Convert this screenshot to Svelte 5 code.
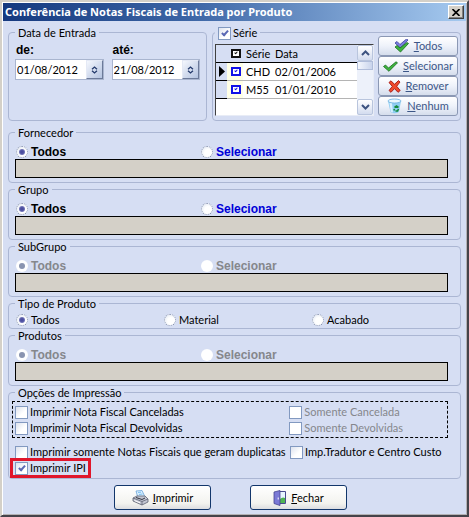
<script>
  let startDate = "01/08/2012";
  let endDate = "21/08/2012";
  let useSeries = true;
  let current = 0;
  let allSeries = true;

  let series = [
    { code: "CHD", date: "02/01/2006", checked: true },
    { code: "M55", date: "01/01/2010", checked: true },
  ];

  const filters = [
    { id: "fornecedor", title: "Fornecedor", disabled: false },
    { id: "grupo", title: "Grupo", disabled: false },
    { id: "subgrupo", title: "SubGrupo", disabled: true },
  ];
  const products = { id: "produtos", title: "Produtos", disabled: true };

  let mode = {
    fornecedor: "todos",
    grupo: "todos",
    subgrupo: "todos",
    produtos: "todos",
  };
  let productType = "Todos";
  const productTypes = ["Todos", "Material", "Acabado"];

  let canceled = false;
  let returned = false;
  let duplicates = false;
  let translator = false;
  let ipi = true;

  const setAll = (value) => {
    series = series.map((s) => ({ ...s, checked: value }));
    allSeries = value;
  };

  const removeCurrent = () => {
    series = series.filter((s, i) => i != current);
    current = 0;
  };
</script>

{#snippet group(f)}
  <fieldset class="filter" disabled={f.disabled}>
    <legend>{f.title}</legend>
    <div class="choices">
      <label class="option">
        <input type="radio" name={f.id} value="todos" bind:group={mode[f.id]} />
        Todos
      </label>
      <label class="option blue">
        <input type="radio" name={f.id} value="sel" bind:group={mode[f.id]} />
        Selecionar
      </label>
    </div>
    <input class="bar" type="text" aria-label={f.title} readonly />
  </fieldset>
{/snippet}

{#snippet arrows()}
  <svg width="7" height="8" viewBox="0 0 7 8">
    <path d="M1 3.2 3.5 1 6 3.2M1 4.8 3.5 7 6 4.8" fill="none" stroke="#23396b" stroke-width="1.3" />
  </svg>
{/snippet}

<main class="window">
  <header>
    <h1>Conferência de Notas Fiscais de Entrada por Produto</h1>
    <button class="close" aria-label="Fechar janela">
      <svg width="8" height="7" viewBox="0 0 8 7">
        <path d="M.5 0 7.5 7M7.5 0 .5 7" stroke="#000" stroke-width="1.6" />
      </svg>
    </button>
  </header>

  <form on:submit|preventDefault>
    <div class="top">
      <fieldset class="dates">
        <legend>Data de Entrada</legend>
        <div class="date-row">
          <div class="date">
            <label for="start">de:</label>
            <div class="spin">
              <input id="start" type="text" bind:value={startDate} />
              <button type="button" aria-label="Alterar data inicial">{@render arrows()}</button>
            </div>
          </div>
          <div class="date">
            <label for="end">até:</label>
            <div class="spin">
              <input id="end" type="text" bind:value={endDate} />
              <button type="button" aria-label="Alterar data final">{@render arrows()}</button>
            </div>
          </div>
        </div>
      </fieldset>

      <fieldset class="series">
        <legend>
          <label class="option"><input type="checkbox" bind:checked={useSeries} />Série</label>
        </legend>
        <div class="series-body">
          <div class="list">
            <div class="table-area">
              <table>
                <thead>
                  <tr>
                    <th class="mark"></th>
                    <th class="tick">
                      <input
                        type="checkbox"
                        class="mini dark"
                        aria-label="Todas as séries"
                        bind:checked={allSeries}
                        on:change={() => setAll(allSeries)}
                      />
                    </th>
                    <th class="code">Série</th>
                    <th>Data</th>
                  </tr>
                </thead>
                <tbody>
                  {#each series as s, i}
                    <tr on:click={() => (current = i)}>
                      <td class="mark">
                        {#if i == current}
                          <svg width="6" height="11" viewBox="0 0 6 11"><path d="M0 0 6 5.5 0 11Z" /></svg>
                        {/if}
                      </td>
                      <td class="tick">
                        <input type="checkbox" class="mini" aria-label={s.code} bind:checked={s.checked} />
                      </td>
                      <td>{s.code}</td>
                      <td>{s.date}</td>
                    </tr>
                  {/each}
                </tbody>
              </table>
            </div>
            <div class="scroll">
              <button type="button" aria-label="Subir">
                <svg width="9" height="6" viewBox="0 0 9 6"><path d="M1 5 4.5 1.5 8 5" fill="none" stroke="#3d5380" stroke-width="2" /></svg>
              </button>
              <div class="thumb"></div>
              <div class="track"></div>
              <button type="button" aria-label="Descer">
                <svg width="9" height="6" viewBox="0 0 9 6"><path d="M1 1 4.5 4.5 8 1" fill="none" stroke="#3d5380" stroke-width="2" /></svg>
              </button>
            </div>
          </div>

          <div class="actions">
            <button type="button" on:click={() => setAll(true)}>
              <svg width="15" height="14" viewBox="0 0 15 14">
                <path d="M1 4 3 2.5 6 5.5 12.5 0 14 1 6.5 9Z" fill="#7a7fe0" stroke="#3c3f9c" stroke-width=".8" />
                <path d="M1 8 3 6.5 6 9 13 3.5 14.5 4.5 6.5 13Z" fill="#3fb53f" stroke="#176b1d" stroke-width=".8" />
              </svg>
              <span><u>T</u>odos</span>
            </button>
            <button type="button">
              <svg width="15" height="11" viewBox="0 0 15 11">
                <path d="M.5 5.5 2.5 4 5.5 7 13 .8 14.5 1.8 6 10.3Z" fill="#3fb53f" stroke="#176b1d" stroke-width=".8" />
              </svg>
              <span><u>S</u>elecionar</span>
            </button>
            <button type="button" on:click={removeCurrent}>
              <svg width="13" height="13" viewBox="0 0 13 13">
                <path d="M1 2.5 3 .8 6.5 4.3 10.5.6 12 2 8.7 6.3 12.2 10.5 10 12.3 6.5 8.6 3 12.3 1 10.5 4.3 6.4Z" fill="#ef4a2c" stroke="#a31510" stroke-width=".9" />
              </svg>
              <span><u>R</u>emover</span>
            </button>
            <button type="button" on:click={() => setAll(false)}>
              <svg width="15" height="16" viewBox="0 0 15 16">
                <path d="M1 3 14 3 12 14Q7.5 16.5 3.5 14Z" fill="#8fcdf2" />
                <path d="M2.5 5 5 5 6 14.5 3.8 13.8Z" fill="#d6f0ff" />
                <ellipse cx="7.5" cy="3" rx="6.5" ry="2" fill="#e9f7ff" stroke="#69aee0" stroke-width=".8" />
                <path d="M7.5 9.5 9.5 8 11.5 9.5M11.5 11 10.5 13 8.5 13M7.5 12.5 7 11" fill="none" stroke="#138a3c" stroke-width="1.6" />
              </svg>
              <span><u>N</u>enhum</span>
            </button>
          </div>
        </div>
      </fieldset>
    </div>

    {#each filters as f}
      {@render group(f)}
    {/each}

    <fieldset class="types">
      <legend>Tipo de Produto</legend>
      <div class="choices three">
        {#each productTypes as t}
          <label class="option">
            <input type="radio" name="tipo" value={t} bind:group={productType} />
            {t}
          </label>
        {/each}
      </div>
    </fieldset>

    {@render group(products)}

    <fieldset class="print">
      <legend>Opções de Impressão</legend>
      <div class="grid dashed">
        <label class="option"><input type="checkbox" bind:checked={canceled} />Imprimir Nota Fiscal Canceladas</label>
        <label class="option off"><input type="checkbox" disabled />Somente Cancelada</label>
        <label class="option"><input type="checkbox" bind:checked={returned} />Imprimir Nota Fiscal Devolvidas</label>
        <label class="option off"><input type="checkbox" disabled />Somente Devolvidas</label>
      </div>
      <div class="grid">
        <label class="option">
          <input type="checkbox" bind:checked={duplicates} />Imprimir somente Notas Fiscais que geram duplicatas
        </label>
        <label class="option"><input type="checkbox" bind:checked={translator} />Imp.Tradutor e Centro Custo</label>
        <label class="option highlight"><input type="checkbox" bind:checked={ipi} />Imprimir IPI</label>
      </div>
    </fieldset>

    <footer>
      <button type="submit">
        <svg width="17" height="16" viewBox="0 0 17 16">
          <path d="M4 1 10 .5 13 7 6 8Z" fill="#d9efff" stroke="#6ba4d8" stroke-width=".8" />
          <path d="M6 2.5 9 2.2M7 4.5 10.5 4" stroke="#7fc0f0" />
          <path d="M1 8 5 6 13 6 16 9 16 12 10 15 1 11Z" fill="#c3c6d2" stroke="#5c6070" stroke-width=".8" />
          <path d="M1 8 10 11.5 16 9M10 11.5 10 15" fill="none" stroke="#5c6070" stroke-width=".8" />
          <path d="M4 7.5 10 9.5 13 8" fill="none" stroke="#33353f" />
          <path d="M2.5 10.5 8 12.8" stroke="#fff" />
        </svg>
        <span><u>I</u>mprimir</span>
      </button>
      <button type="button">
        <svg width="14" height="16" viewBox="0 0 14 16">
          <path d="M5 1.5 12.5 1.5 12.5 13.5 5 13.5Z" fill="#e8f6ff" stroke="#494b8e" />
          <path d="M7 9Q9.5 6.5 12 8L12 13 7 13Z" fill="#4fb553" />
          <path d="M1 2 7 .5 7 15.5 1 13.5Z" fill="#7b79d6" stroke="#46458f" stroke-width=".8" />
          <path d="M5.2 7.5 5.2 9.5" stroke="#fff" />
        </svg>
        <span><u>F</u>echar</span>
      </button>
    </footer>
  </form>
</main>

<style>
  :global(body) {
    margin: 0;
    background: #d6def3;
  }

  .window {
    box-sizing: border-box;
    border: 2px solid #d4d0c8;
    border-right-color: #45434a;
    border-bottom-color: #45434a;
    padding: 1px;
    box-shadow: inset 1px 1px #fff, inset -1px -1px #b4b2b4;
    background: #d6def3;
    font: 11px/14px Lato, "Liberation Sans", Arial, sans-serif;
    color: #000;
  }

  button,
  input {
    font: inherit;
    color: inherit;
    margin: 0;
    box-sizing: border-box;
  }

  button {
    padding: 0;
    display: flex;
    align-items: center;
    justify-content: center;
  }

  svg {
    flex: none;
    display: block;
  }

  header {
    display: flex;
    align-items: center;
    justify-content: space-between;
    height: 18px;
    padding: 0 2px;
    background: linear-gradient(90deg, #15397f, #3c65a5 40%, #a6caf0);
  }

  h1 {
    margin: 0;
    font: bold 11px/18px "Noto Sans", Tahoma, sans-serif;
    color: #fff;
    white-space: nowrap;
  }

  .close {
    width: 16px;
    height: 14px;
    border: 1px solid;
    border-color: #fff #404040 #404040 #fff;
    background: #d4d0c8;
    box-shadow: inset -1px -1px #808080;
  }

  form {
    padding: 5px 5px 4px 5px;
  }

  fieldset {
    min-width: 0;
    margin: 0;
    padding: 0 12px 4px 6px;
    border: 1px solid #abb6d3;
    border-radius: 4px;
  }

  legend {
    height: 12px;
    padding: 0 3px;
  }

  .top {
    display: grid;
    grid-template-columns: 199fr 249fr;
    gap: 5px;
    margin-bottom: 5px;
  }

  .dates {
    padding-right: 6px;
  }

  .date-row {
    display: grid;
    grid-template-columns: 1fr 1fr;
    gap: 8px;
    padding-top: 5px;
  }

  .date {
    min-width: 0;
  }

  .date label {
    display: block;
    height: 16px;
    padding-left: 1px;
    font-family: "Liberation Sans", Arial, sans-serif;
    font-weight: bold;
    font-size: 12px;
  }

  .spin {
    display: flex;
    height: 21px;
    box-sizing: border-box;
    border: 1px solid #a9b5cf;
    background: #fff;
  }

  .spin input {
    flex: 1;
    min-width: 0;
    border: 0;
    padding: 0 1px;
    background: none;
  }

  .spin button {
    width: 17px;
    border: 1px solid;
    border-color: #e4e9f5 #6c7a99 #6c7a99 #e4e9f5;
    background: linear-gradient(135deg, #f4f7fd, #b4c3e0);
  }

  .option {
    display: flex;
    align-items: center;
    white-space: nowrap;
    gap: 2px;
  }

  .option input {
    appearance: none;
    flex: none;
    position: relative;
    width: 13px;
    height: 13px;
    border: 1px solid #8299c0;
    background: linear-gradient(135deg, #dde2ee, #fff 60%);
  }

  .option input[type="radio"] {
    width: 12px;
    height: 12px;
    margin-left: 1px;
    margin-right: 1px;
    border: 1px dotted #8490ae;
    border-radius: 50%;
    background: radial-gradient(circle at 60% 60%, #fff 40%, #dde4f0);
  }

  .option input:disabled {
    background: #fff;
  }

  .option input[type="radio"]:disabled {
    border-color: #fff;
  }

  .option input[type="radio"]:checked::after {
    content: "";
    position: absolute;
    inset: 2px;
    border-radius: 50%;
    background: radial-gradient(circle, #4c4ea0 30%, #9a9fd0);
  }

  .option input[type="radio"]:disabled:checked::after {
    background: #8a94b0;
  }

  .option input[type="checkbox"]:checked::after {
    content: "";
    position: absolute;
    left: 4px;
    top: 1px;
    width: 2px;
    height: 5px;
    border: solid #5a68b4;
    border-width: 0 2px 2px 0;
    transform: rotate(42deg);
  }

  .series {
    padding: 0 2px 4px 2px;
  }

  .series-body {
    display: flex;
    gap: 4px;
  }

  .list {
    flex: 1;
    min-width: 0;
    display: flex;
    height: 72px;
    margin-top: 6px;
    box-sizing: border-box;
    border: 1px solid;
    border-color: #404040 #e8ecf6 #e8ecf6 #404040;
    background: #fff;
  }

  .table-area {
    flex: 1;
    min-width: 0;
    overflow: hidden;
  }

  table {
    width: 100%;
    border-collapse: collapse;
    table-layout: fixed;
  }

  th,
  td {
    height: 17px;
    padding: 0;
    border-bottom: 1px solid #b4b4b4;
    font-weight: normal;
    text-align: left;
    white-space: nowrap;
  }

  th {
    background: #d6def3;
    border-bottom-color: #000;
  }

  .mark {
    width: 11px;
  }

  td.mark {
    background: #d6def3;
    border-bottom-color: #000;
  }

  .mark svg {
    margin-left: 3px;
  }

  .tick {
    width: 19px;
  }

  td.tick {
    background: linear-gradient(90deg, #ffffe6 16px, #fff 16px);
  }

  .code {
    width: 29px;
  }

  .mini {
    appearance: none;
    display: block;
    position: relative;
    width: 10px;
    height: 9px;
    margin-left: 4px;
    border: 2px solid #1212e8;
    background: #fff;
  }

  .mini.dark {
    border-color: #111;
  }

  .mini:checked::after {
    content: "";
    position: absolute;
    left: 2px;
    top: 0;
    width: 1px;
    height: 2px;
    border: solid #1212e8;
    border-width: 0 1px 1px 0;
    transform: rotate(42deg);
  }

  .mini.dark:checked::after {
    border-color: #111;
  }

  .scroll {
    display: flex;
    flex-direction: column;
    width: 16px;
    background: #edf1fa;
  }

  .scroll button {
    height: 16px;
    border: 1px solid #b9c5dd;
    border-radius: 2px;
    background: linear-gradient(#fff, #d3dcef);
  }

  .thumb {
    height: 9px;
    box-sizing: border-box;
    border: 1px solid #b0bdda;
    background: linear-gradient(90deg, #f4f7fd, #c9d4ec);
  }

  .track {
    flex: 1;
  }

  .actions {
    width: 80px;
    margin-top: -2px;
  }

  .actions button {
    width: 100%;
    height: 20px;
    gap: 5px;
    border: 1px solid #8b98b4;
    border-radius: 3px;
    background: linear-gradient(#fff, #eef2fa 50%, #d5ddec);
    color: #3c5687;
  }

  .choices {
    display: grid;
    grid-template-columns: 185fr 248fr;
    height: 15px;
    padding-top: 6px;
    font-family: "Liberation Sans", Arial, sans-serif;
    font-weight: bold;
    font-size: 12px;
  }

  .choices.three {
    grid-template-columns: 148fr 148fr 137fr;
    font-family: inherit;
    font-weight: normal;
    font-size: 11px;
    padding-top: 3px;
  }

  .types {
    padding-bottom: 1px;
  }

  .blue {
    color: #0000d8;
  }

  fieldset:disabled .option,
  .off {
    color: #85878c;
  }

  .bar {
    display: block;
    width: 100%;
    height: 19px;
    border: 1px solid #000;
    border-radius: 0;
    padding: 0 2px;
    background: #d4d0c8;
  }

  .grid {
    display: grid;
    grid-template-columns: minmax(0, 275fr) minmax(0, 158fr);
    grid-auto-rows: 16px;
  }

  .dashed {
    margin: 3px 0 6px -3px;
    padding: 2px 0 1px 2px;
    border: 1px dashed #000;
  }

  .print {
    padding-bottom: 2px;
  }

  .highlight {
    position: relative;
    justify-self: start;
  }

  .highlight::after {
    content: "";
    position: absolute;
    inset: -2px -5px;
    border: 3px solid #e0162b;
    pointer-events: none;
  }

  footer {
    display: flex;
    justify-content: center;
    gap: 39px;
    padding: 6px 8px 0 0;
  }

  footer button {
    width: 97px;
    height: 25px;
    gap: 4px;
    border: 1px solid #12366b;
    border-radius: 3px;
    background: linear-gradient(#fff, #f3f3ef 75%, #dcdde0);
  }
</style>
